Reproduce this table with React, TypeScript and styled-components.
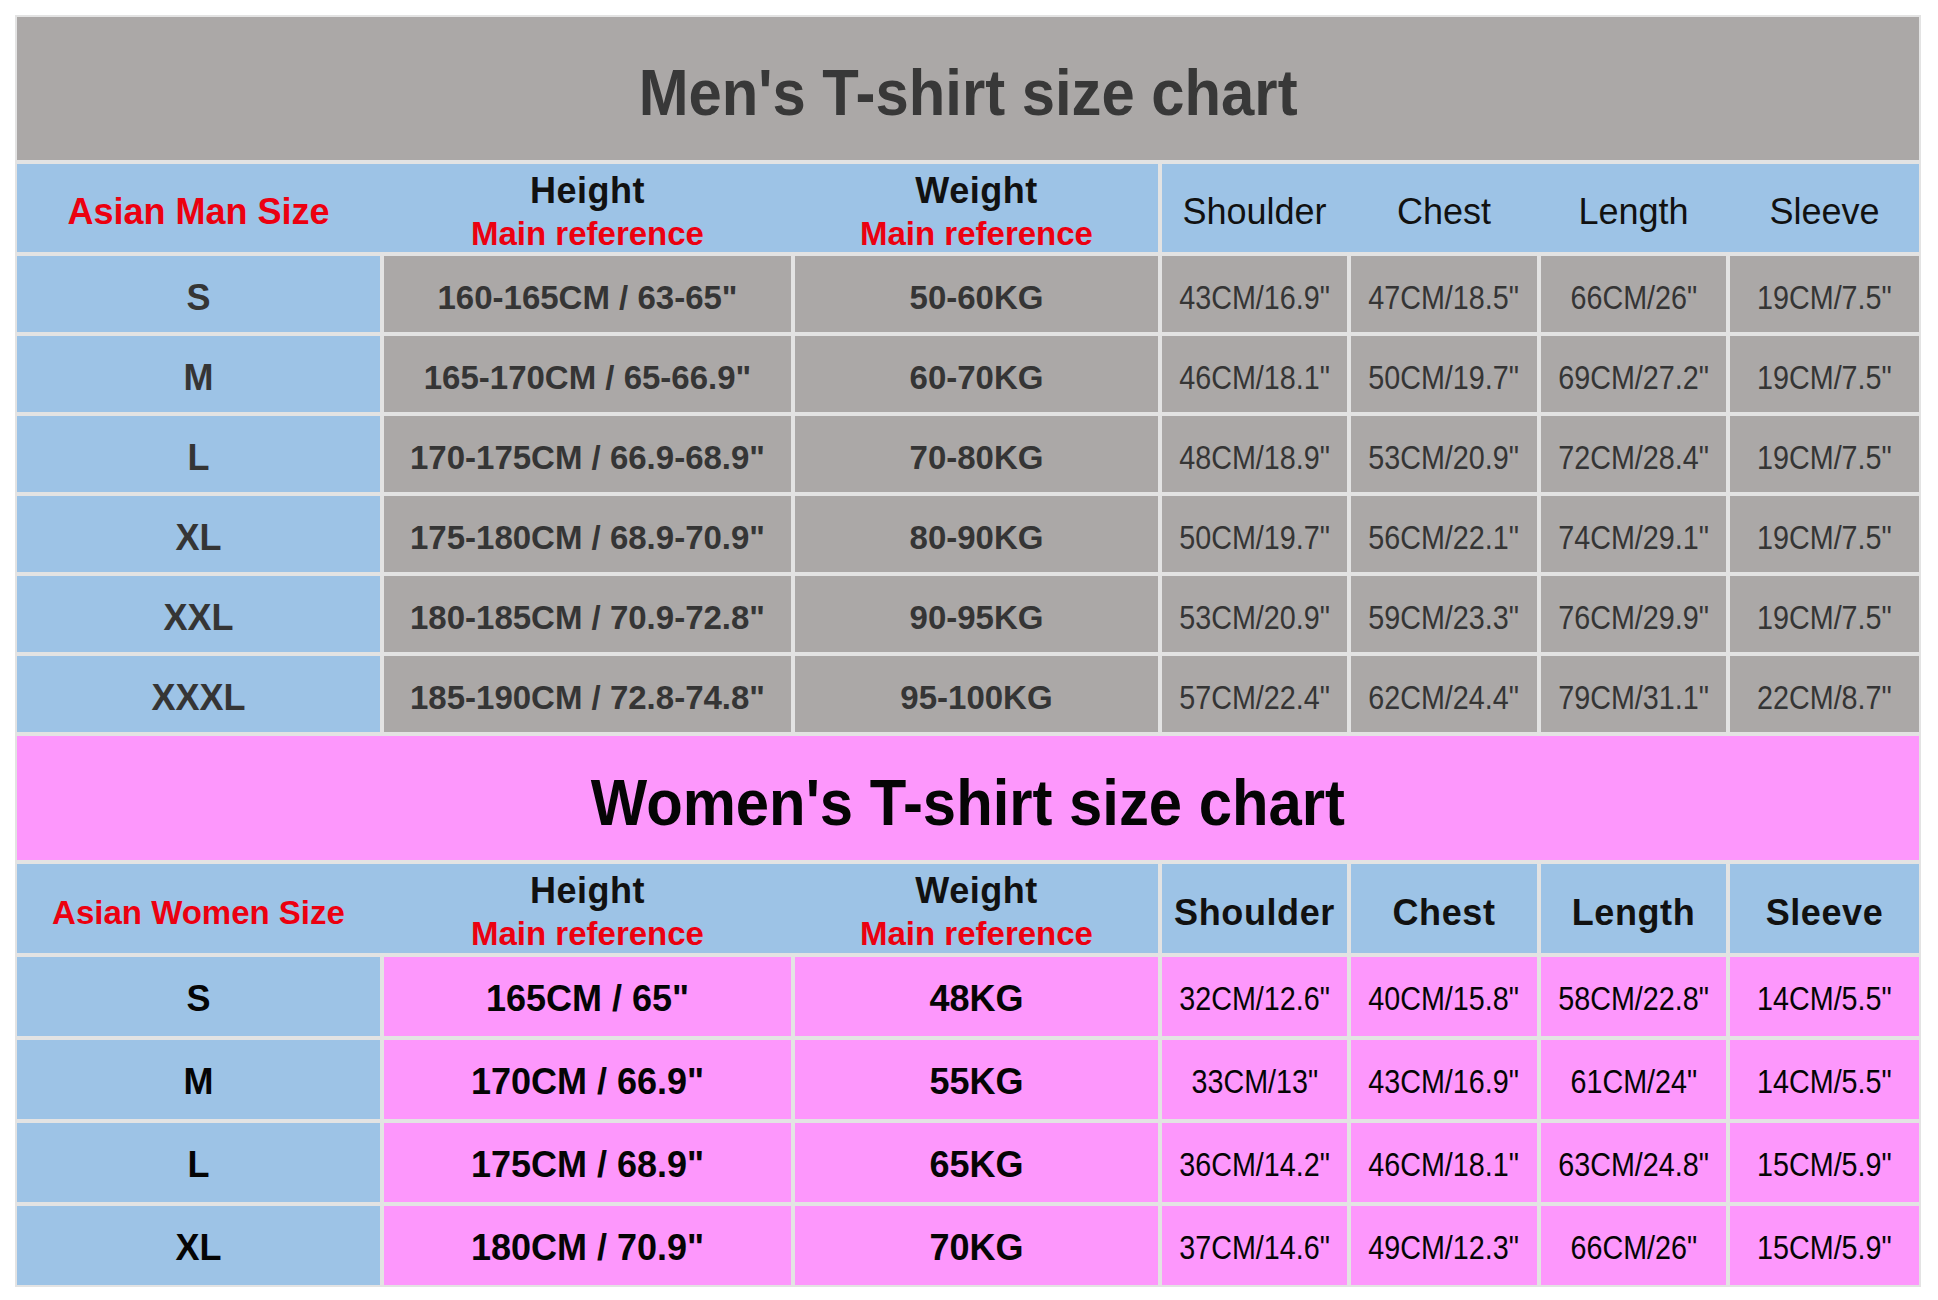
import React from 'react';
import styled, { createGlobalStyle } from 'styled-components';

const Global = createGlobalStyle`
  html, body { margin: 0; padding: 0; background: #ffffff; }
  body { font-family: "Liberation Sans", Arial, sans-serif; }
`;

const GREY = '#aba8a7';
const BLUE = '#9dc3e6';
const PINK = '#fd97fc';
const RED = '#ec0010';
const LINE = '#e3e3e3';

const Page = styled.div`
  width: 1938px;
  height: 1300px;
  box-sizing: border-box;
  padding: 15px 0 0 15px;
  background: #fff;
`;

const Table = styled.div`
  display: grid;
  width: fit-content;
  grid-template-columns: 363px 407px 363px 185px 186px 185px 189px;
  grid-template-rows: 143px 88px repeat(6, 76px) 124px 89px repeat(4, 79px);
  gap: 4px;
  padding: 2px;
  background: ${LINE};
`;

const TitleBar = styled.div<{ $bg: string; $color: string }>`
  grid-column: 1 / -1;
  display: flex;
  align-items: center;
  justify-content: center;
  padding-top: 8px;
  box-sizing: border-box;
  background: ${(p) => p.$bg};
  color: ${(p) => p.$color};
  font-size: 65px;
  font-weight: 700;
`;

const Narrow = styled.span<{ $scale: number }>`
  display: inline-block;
  white-space: nowrap;
  transform: scaleX(${(p) => p.$scale});
`;

const HeaderGroup = styled.div<{ $span: number }>`
  grid-column: span ${(p) => p.$span};
  display: grid;
  grid-template-columns: subgrid;
  min-height: 0;
  overflow: hidden;
  background: ${BLUE};
`;

const HeaderCell = styled.div`
  display: flex;
  flex-direction: column;
  align-items: center;
  justify-content: center;
  min-height: 0;
  padding-top: 8px;
  box-sizing: border-box;
  background: ${BLUE};
  white-space: nowrap;
  overflow: hidden;
`;

const SizeTitle = styled.div<{ $size: number }>`
  color: ${RED};
  font-weight: 700;
  font-size: ${(p) => p.$size}px;
`;

const HeadMain = styled.div`
  flex: none;
  color: #111;
  font-weight: 700;
  font-size: 36px;
  line-height: 40px;
  letter-spacing: 0.5px;
`;

const HeadSub = styled.div`
  flex: none;
  margin-top: 3px;
  color: ${RED};
  font-weight: 700;
  font-size: 33px;
  line-height: 40px;
`;

const MeasureHead = styled.div<{ $bold: boolean }>`
  color: #111;
  font-size: 36px;
  font-weight: ${(p) => (p.$bold ? 700 : 400)};
  letter-spacing: ${(p) => (p.$bold ? '0.6px' : '0')};
`;

const Cell = styled.div<{ $bg: string; $color: string; $shift: number }>`
  display: flex;
  align-items: center;
  justify-content: center;
  box-sizing: border-box;
  padding-top: ${(p) => p.$shift}px;
  background: ${(p) => p.$bg};
  color: ${(p) => p.$color};
  white-space: nowrap;
`;

const SizeCell = styled(Cell)`
  font-size: 36px;
  font-weight: 700;
`;

const RangeCell = styled(Cell)<{ $size: number }>`
  font-size: ${(p) => p.$size}px;
  font-weight: 700;
`;

const MeasureCell = styled(Cell)`
  font-size: 33px;
  font-weight: 400;
`;

type Row = [string, string, string, string, string, string, string];

const men: Row[] = [
  ['S', '160-165CM / 63-65"', '50-60KG', '43CM/16.9"', '47CM/18.5"', '66CM/26"', '19CM/7.5"'],
  ['M', '165-170CM / 65-66.9"', '60-70KG', '46CM/18.1"', '50CM/19.7"', '69CM/27.2"', '19CM/7.5"'],
  ['L', '170-175CM / 66.9-68.9"', '70-80KG', '48CM/18.9"', '53CM/20.9"', '72CM/28.4"', '19CM/7.5"'],
  ['XL', '175-180CM / 68.9-70.9"', '80-90KG', '50CM/19.7"', '56CM/22.1"', '74CM/29.1"', '19CM/7.5"'],
  ['XXL', '180-185CM / 70.9-72.8"', '90-95KG', '53CM/20.9"', '59CM/23.3"', '76CM/29.9"', '19CM/7.5"'],
  ['XXXL', '185-190CM / 72.8-74.8"', '95-100KG', '57CM/22.4"', '62CM/24.4"', '79CM/31.1"', '22CM/8.7"'],
];

const women: Row[] = [
  ['S', '165CM / 65"', '48KG', '32CM/12.6"', '40CM/15.8"', '58CM/22.8"', '14CM/5.5"'],
  ['M', '170CM / 66.9"', '55KG', '33CM/13"', '43CM/16.9"', '61CM/24"', '14CM/5.5"'],
  ['L', '175CM / 68.9"', '65KG', '36CM/14.2"', '46CM/18.1"', '63CM/24.8"', '15CM/5.9"'],
  ['XL', '180CM / 70.9"', '70KG', '37CM/14.6"', '49CM/12.3"', '66CM/26"', '15CM/5.9"'],
];

const measures = ['Shoulder', 'Chest', 'Length', 'Sleeve'];

function DataRows({ rows, bg, color, rangeSize, shift }: { rows: Row[]; bg: string; color: string; rangeSize: number; shift: number }) {
  return (
    <>
      {rows.map((r) => (
        <React.Fragment key={r[0]}>
          <SizeCell $bg={BLUE} $color={color} $shift={shift}>{r[0]}</SizeCell>
          <RangeCell $bg={bg} $color={color} $size={rangeSize} $shift={shift}>{r[1]}</RangeCell>
          <RangeCell $bg={bg} $color={color} $size={rangeSize} $shift={shift}>{r[2]}</RangeCell>
          {r.slice(3).map((v, i) => (
            <MeasureCell key={i} $bg={bg} $color={color} $shift={shift}>
              <Narrow $scale={0.87}>{v}</Narrow>
            </MeasureCell>
          ))}
        </React.Fragment>
      ))}
    </>
  );
}

function MainHeads({ label, labelSize }: { label: string; labelSize: number }) {
  return (
    <HeaderGroup $span={3}>
      <HeaderCell>
        <SizeTitle $size={labelSize}>{label}</SizeTitle>
      </HeaderCell>
      <HeaderCell>
        <HeadMain>Height</HeadMain>
        <HeadSub>Main reference</HeadSub>
      </HeaderCell>
      <HeaderCell>
        <HeadMain>Weight</HeadMain>
        <HeadSub>Main reference</HeadSub>
      </HeaderCell>
    </HeaderGroup>
  );
}

export default function App() {
  return (
    <Page>
      <Global />
      <Table>
        <TitleBar $bg={GREY} $color="#383838">
          <Narrow $scale={0.92}>Men's T-shirt size chart</Narrow>
        </TitleBar>
        <MainHeads label="Asian Man Size" labelSize={36} />
        <HeaderGroup $span={4}>
          {measures.map((m) => (
            <HeaderCell key={m}>
              <MeasureHead $bold={false}>{m}</MeasureHead>
            </HeaderCell>
          ))}
        </HeaderGroup>
        <DataRows rows={men} bg={GREY} color="#353535" rangeSize={33} shift={8} />

        <TitleBar $bg={PINK} $color="#050505">
          <Narrow $scale={0.92}>Women's T-shirt size chart</Narrow>
        </TitleBar>
        <MainHeads label="Asian Women Size" labelSize={33} />
        {measures.map((m) => (
          <HeaderCell key={m}>
            <MeasureHead $bold={true}>{m}</MeasureHead>
          </HeaderCell>
        ))}
        <DataRows rows={women} bg={PINK} color="#050505" rangeSize={36} shift={4} />
      </Table>
    </Page>
  );
}
